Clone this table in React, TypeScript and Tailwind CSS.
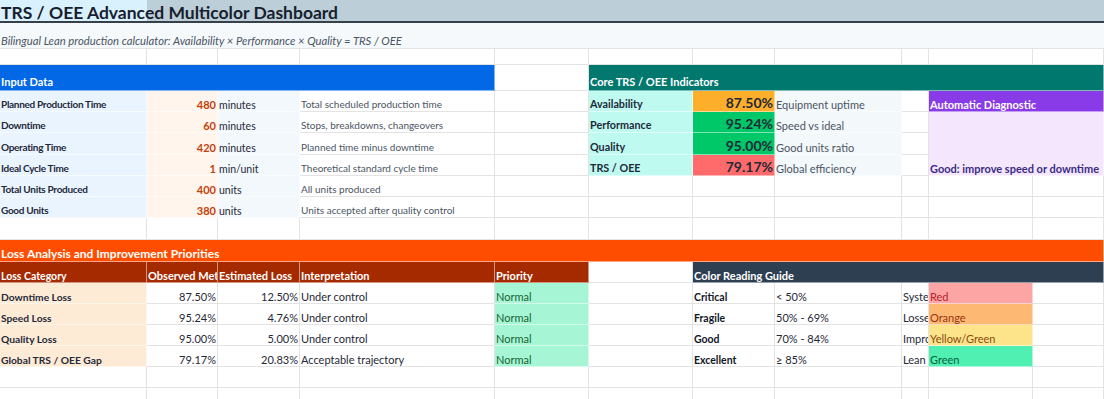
import React from 'react';

const line = 'border-r border-b border-[#e3e3e3]';
const soft = 'border-r border-b border-white/50';

const Cell = ({ className = '', b = line, children }: { className?: string; b?: string; children?: React.ReactNode }) => (
  <div className={`${b} flex items-end overflow-hidden whitespace-nowrap px-[1px] pb-[1px] leading-none ${className}`}>{children}</div>
);

const Empty = ({ n }: { n: number }) => (
  <>
    {Array.from({ length: n }).map((_, i) => (
      <Cell key={i} />
    ))}
  </>
);

const inputs = [
  ['Planned Production Time', '480', 'minutes', 'Total scheduled production time'],
  ['Downtime', '60', 'minutes', 'Stops, breakdowns, changeovers'],
  ['Operating Time', '420', 'minutes', 'Planned time minus downtime'],
  ['Ideal Cycle Time', '1', 'min/unit', 'Theoretical standard cycle time'],
  ['Total Units Produced', '400', 'units', 'All units produced'],
  ['Good Units', '380', 'units', 'Units accepted after quality control'],
];

const core = [
  ['Availability', '87.50%', 'bg-[#fdae2b]', 'Equipment uptime'],
  ['Performance', '95.24%', 'bg-[#00c868]', 'Speed vs ideal'],
  ['Quality', '95.00%', 'bg-[#00c868]', 'Good units ratio'],
  ['TRS / OEE', '79.17%', 'bg-[#ff6b6b]', 'Global efficiency'],
];

const losses = [
  ['Downtime Loss', '87.50%', '12.50%', 'Under control'],
  ['Speed Loss', '95.24%', '4.76%', 'Under control'],
  ['Quality Loss', '95.00%', '5.00%', 'Under control'],
  ['Global TRS / OEE Gap', '79.17%', '20.83%', 'Acceptable trajectory'],
];

const guide = [
  ['Critical', '< 50%', 'Systemic losses', 'Red', 'bg-[#fda4a4] text-[#b4232c]'],
  ['Fragile', '50% - 69%', 'Losses visible', 'Orange', 'bg-[#fdb974] text-[#9a3412]'],
  ['Good', '70% - 84%', 'Improvement zone', 'Yellow/Green', 'bg-[#fde38a] text-[#8a4b0f]'],
  ['Excellent', '≥ 85%', 'Lean excellence', 'Green', 'bg-[#50f0b2] text-[#06603f]'],
];

export default function App() {
  return (
    <div className="w-[1104px] h-[399px] overflow-hidden bg-white font-['Lato',sans-serif] text-[11px] text-[#1f2937] grid grid-cols-[147px_71px_82px_195px_94px_104px_82px_127px_27px_104px_71px] grid-rows-[23px_26px_16px_26px_21px_21px_22px_21px_21px_21px_22px_22px_21px_21px_21px_21px_21px_21px_21px]">
      {/* Title */}
      <div className="col-span-11 flex items-end px-[1px] bg-[linear-gradient(to_right,#d9f1fc_147px,#bccfd8_147px)] border-b-2 border-[#36404a] text-[17.5px] font-bold text-[#17202e] leading-none">
        TRS / OEE Advanced Multicolor Dashboard
      </div>
      <div className="col-span-11 flex items-end px-[1px] pb-[2px] bg-[#f5f9fc] border-b border-[#e3e3e3] italic text-[11.25px] text-[#4b5563] leading-none">
        Bilingual Lean production calculator: Availability × Performance × Quality = TRS / OEE
      </div>
      <Empty n={11} />

      {/* Section headers */}
      <Cell b={soft} className="col-span-4 bg-[#0268e6] text-white font-bold pb-[3px]">Input Data</Cell>
      <Cell />
      <Cell b={soft} className="col-span-6 bg-[#00786e] text-white font-bold pb-[3px]">Core TRS / OEE Indicators</Cell>

      {inputs.map((r, i) => (
        <React.Fragment key={r[0]}>
          <Cell b={soft} className="bg-[#eaf4ff] font-bold text-[10px] tracking-[-0.3px] text-[#1e293b] pb-[2px]">{r[0]}</Cell>
          <Cell b={soft} className="bg-[#fff5ec] justify-end font-bold text-[#c2410c]">{r[1]}</Cell>
          <Cell b={soft} className="bg-[#f3f8fd] text-[10.5px]">{r[2]}</Cell>
          <Cell className="text-[10px] text-[#4b5563] pb-[2px]">{r[3]}</Cell>
          <Cell />
          {i < 4 ? (
            <>
              <Cell b={soft} className="bg-[#befaf0] font-bold text-[10.75px] text-[#1e293b]">{core[i][0]}</Cell>
              <Cell b={soft} className={`${core[i][2]} justify-end text-[14px] font-bold text-[#1f2937]`}>{core[i][1]}</Cell>
              <Cell b={soft} className="bg-[#f3f8fb] text-[#4b5563]">{core[i][3]}</Cell>
              <Cell />
              {i === 0 && (
                <Cell b={soft} className="col-span-2 bg-[#8a3be8] text-white font-bold">Automatic Diagnostic</Cell>
              )}
              {i === 1 && (
                <Cell b={soft} className="col-span-2 row-span-3 bg-[#f4e6fd] font-bold text-[#3b2d84]">
                  Good: improve speed or downtime
                </Cell>
              )}
            </>
          ) : (
            <Empty n={6} />
          )}
        </React.Fragment>
      ))}

      <Empty n={11} />

      {/* Loss analysis */}
      <Cell b={soft} className="col-span-11 bg-[#ff4d00] text-white font-bold text-[12px]">Loss Analysis and Improvement Priorities</Cell>
      {['Loss Category', 'Observed Metric', 'Estimated Loss', 'Interpretation', 'Priority'].map((h, i) => (
        <Cell key={h} b={soft} className={`bg-[#a62a00] text-white font-bold ${i === 0 ? 'text-[10.5px]' : ''}`}>{h}</Cell>
      ))}
      <Cell />
      <Cell b={soft} className="col-span-5 bg-[#2e3f52] text-white font-bold">Color Reading Guide</Cell>

      {losses.map((r, i) => (
        <React.Fragment key={r[0]}>
          <Cell b={soft} className="bg-[#feebd6] font-bold text-[10.25px] text-[#1e293b]">{r[0]}</Cell>
          <Cell className="justify-end">{r[1]}</Cell>
          <Cell className="justify-end">{r[2]}</Cell>
          <Cell>{r[3]}</Cell>
          <Cell b={soft} className="bg-[#a6f5d4] text-[#166534]">Normal</Cell>
          <Cell />
          <Cell className="font-bold text-[10.5px] text-[#111827]">{guide[i][0]}</Cell>
          <Cell>{guide[i][1]}</Cell>
          <Cell>{guide[i][2]}</Cell>
          <Cell b={soft} className={guide[i][4]}>{guide[i][3]}</Cell>
          <Cell />
        </React.Fragment>
      ))}

      <Empty n={11} />
      <Empty n={11} />
    </div>
  );
}
